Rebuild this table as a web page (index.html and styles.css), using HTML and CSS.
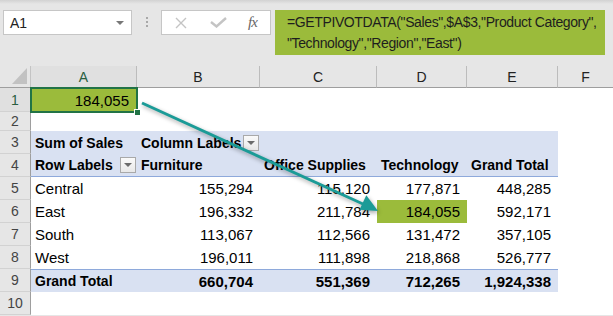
FILE: index.html
```html
<!DOCTYPE html>
<html>
<head>
<meta charset="utf-8">
<link rel="stylesheet" href="styles.css">
</head>
<body>
<div class="fbar">
  <div class="namebox"><span>A1</span><span class="nb-arrow"></span></div>
  <div class="dots"><i></i><i></i><i></i></div>
  <div class="fxbox">
    <svg class="ico-x" width="12" height="12" viewBox="0 0 12 12"><path d="M1 1 L11 11 M11 1 L1 11" stroke="#c4c4c4" stroke-width="1.4" fill="none"/></svg>
    <svg class="ico-ok" width="17" height="11" viewBox="0 0 17 11"><path d="M1 5 L6.5 9.5 L16 1" stroke="#c4c4c4" stroke-width="2.4" fill="none"/></svg>
    <span class="fx">fx</span>
  </div>
  <div class="formula">=GETPIVOTDATA("Sales",$A$3,"Product Category",<br>"Technology","Region","East")</div>
</div>

<div class="sheet">
  <div class="corner"></div>
  <div class="ch sel">A</div>
  <div class="ch">B</div>
  <div class="ch">C</div>
  <div class="ch">D</div>
  <div class="ch">E</div>
  <div class="ch last">F</div>

  <div class="rh sel">1</div>
  <div class="c num a1">184,055</div>
  <div class="c"></div><div class="c"></div><div class="c"></div><div class="c"></div><div class="c"></div>

  <div class="rh">2</div>
  <div class="c"></div><div class="c"></div><div class="c"></div><div class="c"></div><div class="c"></div><div class="c"></div>

  <div class="rh">3</div>
  <div class="c pv b">Sum of Sales</div>
  <div class="c pv b dd">Column Labels<span class="btn"></span></div>
  <div class="c pv"></div><div class="c pv"></div><div class="c pv"></div><div class="c"></div>

  <div class="rh">4</div>
  <div class="c pv b dd hd">Row Labels<span class="btn"></span></div>
  <div class="c pv b hd">Furniture</div>
  <div class="c pv b hd">Office Supplies</div>
  <div class="c pv b hd">Technology</div>
  <div class="c pv b hd">Grand Total</div>
  <div class="c"></div>

  <div class="rh">5</div>
  <div class="c">Central</div>
  <div class="c num">155,294</div><div class="c num">115,120</div><div class="c num">177,871</div><div class="c num">448,285</div><div class="c"></div>

  <div class="rh">6</div>
  <div class="c">East</div>
  <div class="c num">196,332</div><div class="c num">211,784</div><div class="c num hl">184,055</div><div class="c num">592,171</div><div class="c"></div>

  <div class="rh">7</div>
  <div class="c">South</div>
  <div class="c num">113,067</div><div class="c num">112,566</div><div class="c num">131,472</div><div class="c num">357,105</div><div class="c"></div>

  <div class="rh">8</div>
  <div class="c">West</div>
  <div class="c num">196,011</div><div class="c num">111,898</div><div class="c num">218,868</div><div class="c num">526,777</div><div class="c"></div>

  <div class="rh">9</div>
  <div class="c pv b tot lbl">Grand Total</div>
  <div class="c pv b tot num">660,704</div><div class="c pv b tot num">551,369</div><div class="c pv b tot num">712,265</div><div class="c pv b tot num">1,924,338</div><div class="c"></div>

  <div class="rh">10</div>
  <div class="c"></div><div class="c"></div><div class="c"></div><div class="c"></div><div class="c"></div><div class="c"></div>
</div>

<svg class="arrow" width="613" height="316" viewBox="0 0 613 316">
  <line x1="142" y1="103" x2="363" y2="204" stroke="#1b9b97" stroke-width="3"/>
  <polygon points="378,211 359.5,209.8 366.3,195.2" fill="#1b9b97"/>
</svg>
</body>
</html>
```

FILE: styles.css
```css
html, body {
  margin: 0;
  padding: 0;
}
body {
  width: 613px;
  height: 316px;
  overflow: hidden;
  background: #e6e6e6;
  font-family: "Liberation Sans", Arial, sans-serif;
  position: relative;
}
.fbar {
  height: 66px;
  box-sizing: border-box;
  padding: 10px 0 0 3px;
  display: flex;
  align-items: flex-start;
  background: linear-gradient(#d2d2d2, #e6e6e6 4px);
}
.namebox {
  width: 129px;
  height: 25px;
  box-sizing: border-box;
  border: 1px solid #c6c6c6;
  background: #fff;
  display: flex;
  align-items: center;
  justify-content: space-between;
  padding: 0 7px 0 6px;
  font-size: 14px;
  color: #222;
}
.nb-arrow {
  width: 0;
  height: 0;
  border-left: 4px solid transparent;
  border-right: 4px solid transparent;
  border-top: 4px solid #777;
}
.dots {
  margin: 7px 0 0 14px;
  width: 3px;
  display: flex;
  flex-direction: column;
  gap: 2px;
}
.dots i {
  width: 2px;
  height: 2px;
  background: #a8a8a8;
}
.fxbox {
  margin-left: 12px;
  width: 110px;
  height: 25px;
  box-sizing: border-box;
  border: 1px solid #c6c6c6;
  background: #fff;
  display: flex;
  align-items: center;
  padding-left: 13px;
}
.ico-ok {
  margin-left: 23px;
}
.fx {
  margin-left: 21px;
  font-family: "Liberation Serif", serif;
  font-style: italic;
  font-size: 15px;
  color: #666;
  letter-spacing: -1px;
}
.formula {
  margin-left: 4px;
  width: 330px;
  height: 45px;
  box-sizing: border-box;
  background: #9bbb3b;
  padding: 2px 0 0 12px;
  font-size: 14px;
  letter-spacing: -0.38px;
  line-height: 21px;
  color: #1e1e1e;
  white-space: nowrap;
  overflow: hidden;
}
.sheet {
  display: grid;
  grid-template-columns: 31px 106px 123px 117px 90px 91px 55px;
  grid-template-rows: 22px 24px 19px repeat(8, 23px);
  background: #fff;
}
.corner {
  background: #e6e6e6;
  border-right: 1px solid #c4c4c4;
  border-bottom: 1px solid #9e9e9e;
  position: relative;
}
.corner::after {
  content: "";
  position: absolute;
  right: 3px;
  bottom: 3px;
  width: 15px;
  height: 16px;
  background: #c2c2c2;
  clip-path: polygon(100% 0, 100% 100%, 0 100%);
}
.ch {
  background: #e6e6e6;
  border-right: 1px solid #bcbcbc;
  border-bottom: 1px solid #9e9e9e;
  display: flex;
  align-items: center;
  justify-content: center;
  font-size: 14px;
  color: #222;
}
.ch.last { border-right: none; }
.ch.sel, .rh.sel {
  background: #e0e0e0;
  color: #2a5e3f;
}
.rh {
  background: #e6e6e6;
  border-right: 1px solid #9e9e9e;
  border-bottom: 1px solid #d2d2d2;
  display: flex;
  align-items: center;
  justify-content: center;
  font-size: 14px;
  color: #444;
}
.c {
  display: flex;
  align-items: center;
  padding: 0 4px;
  font-size: 15px;
  color: #000;
  white-space: nowrap;
  min-width: 0;
}
.num {
  justify-content: flex-end;
  padding-right: 7px;
}
.pv {
  background: #d9e1f2;
}
.b {
  font-weight: bold;
  font-size: 14px;
}
.b.num {
  font-size: 15px;
}
.hd {
  border-bottom: 1px solid #8ea9db;
}
.tot {
  border-top: 1px solid #8ea9db;
}
.dd {
  justify-content: space-between;
  padding-right: 1px;
}
.btn {
  flex: none;
  width: 16px;
  height: 16px;
  box-sizing: border-box;
  border: 1px solid #a9a9a9;
  background: linear-gradient(#fafafa, #e8e8e8);
  display: flex;
  align-items: center;
  justify-content: center;
}
.btn::after {
  content: "";
  width: 0;
  height: 0;
  border-left: 4px solid transparent;
  border-right: 4px solid transparent;
  border-top: 4px solid #6b6b6b;
}
.a1 {
  background: #9bbb3b;
  position: relative;
  padding-right: 8px;
}
.a1::before {
  content: "";
  position: absolute;
  left: -1px;
  top: -1px;
  right: -1px;
  bottom: -1px;
  border: 2px solid #217346;
}
.a1::after {
  content: "";
  position: absolute;
  right: -4px;
  bottom: -4px;
  width: 5px;
  height: 5px;
  background: #217346;
  border: 1px solid #fff;
}
.hl {
  background: #9bbb3b;
}
.arrow {
  position: absolute;
  left: 0;
  top: 0;
  pointer-events: none;
  filter: drop-shadow(1px 2px 2px rgba(0,0,0,0.35));
}
```
